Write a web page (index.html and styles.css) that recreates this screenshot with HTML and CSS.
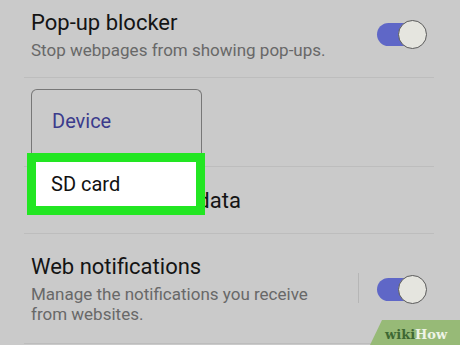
FILE: index.html
```html
<!DOCTYPE html>
<html>
<head>
<meta charset="utf-8">
<link rel="stylesheet" href="styles.css">
</head>
<body>
<div class="list">
  <div class="item item-popup">
    <div class="text">
      <div class="title">Pop-up blocker</div>
      <div class="desc">Stop webpages from showing pop-ups.</div>
    </div>
    <div class="toggle toggle-1"><span class="track"></span><span class="knob"></span></div>
  </div>
  <div class="item item-storage">
    <div class="menu">
      <div class="option">Device</div>
      <div class="option selected">SD card</div>
    </div>
  </div>
  <div class="item item-data">
    <div class="text">
      <div class="title"><span class="covered">Manage website </span>data</div>
    </div>
  </div>
  <div class="item item-notif">
    <div class="text">
      <div class="title">Web notifications</div>
      <div class="desc">Manage the notifications you receive<br>from websites.</div>
    </div>
    <div class="vsep"></div>
    <div class="toggle toggle-2"><span class="track"></span><span class="knob"></span></div>
  </div>
</div>
<div class="wikihow"><span class="wiki">wiki</span><span class="how">How</span></div>
</body>
</html>
```
FILE: styles.css
```css
html, body {
  margin: 0;
  padding: 0;
}
body {
  width: 460px;
  height: 345px;
  overflow: hidden;
  background: #cacaca;
  font-family: Roboto, "Liberation Sans", sans-serif;
  position: relative;
}
.list {
  margin: 0 26px 0 24px;
}
.item {
  display: flex;
  align-items: flex-start;
  box-sizing: border-box;
  padding-left: 7px;
  border-bottom: 1px solid #bdbdbd;
  position: relative;
}
.item-popup {
  height: 78px;
  padding-top: 10px;
}
.item-storage {
  height: 89px;
}
.item-data {
  height: 67px;
  padding-top: 21px;
}
.item-notif {
  height: 110px;
  padding-top: 20px;
}
.text {
  flex: 1;
}
.title {
  font-size: 22px;
  line-height: 26px;
  color: #141414;
}
.covered {
  visibility: hidden;
}
.desc {
  margin-top: 4px;
  font-size: 17px;
  line-height: 20px;
  color: #686868;
}
.toggle {
  display: flex;
  align-items: center;
  width: 50px;
  height: 30px;
  margin-right: 7px;
}
.toggle-1 {
  margin-top: 9px;
}
.toggle-2 {
  margin-top: 20px;
}
.track {
  width: 44px;
  height: 23px;
  border-radius: 12px;
  background: #5f67c7;
}
.knob {
  box-sizing: border-box;
  width: 29px;
  height: 29px;
  margin-left: -23px;
  border-radius: 50%;
  border: 1px solid #5a5a5a;
  background: #e5e5df;
}
.vsep {
  width: 1px;
  height: 30px;
  margin-top: 19px;
  margin-right: 18px;
  background: #b6b6b6;
}
.menu {
  position: absolute;
  left: 7px;
  top: 11px;
  width: 171px;
  box-sizing: border-box;
  border: 1px solid #777;
  border-bottom-width: 0;
  border-radius: 6px;
  background: #cacaca;
  z-index: 2;
}
.option {
  height: 63px;
  line-height: 63px;
  padding-left: 20px;
  font-size: 20px;
  color: #3b3b8c;
}
.option.selected {
  box-sizing: border-box;
  height: 62px;
  line-height: 44px;
  margin: 0 -4px 0 -5px;
  padding-left: 15px;
  border: 9px solid #22e622;
  background: #ffffff;
  color: #111;
}
.wikihow {
  position: absolute;
  left: 370px;
  top: 320px;
  width: 90px;
  height: 25px;
  box-sizing: border-box;
  padding: 2px 0 0 15px;
  line-height: 25px;
  background: #97ba77;
  clip-path: polygon(12px 0, 100% 0, 100% 100%, 0 100%);
  font-family: "DejaVu Serif", "Liberation Serif", serif;
  font-weight: bold;
  font-size: 13px;
  white-space: nowrap;
}
.wiki {
  color: #3e6833;
}
.how {
  color: #eef4e6;
}
```
